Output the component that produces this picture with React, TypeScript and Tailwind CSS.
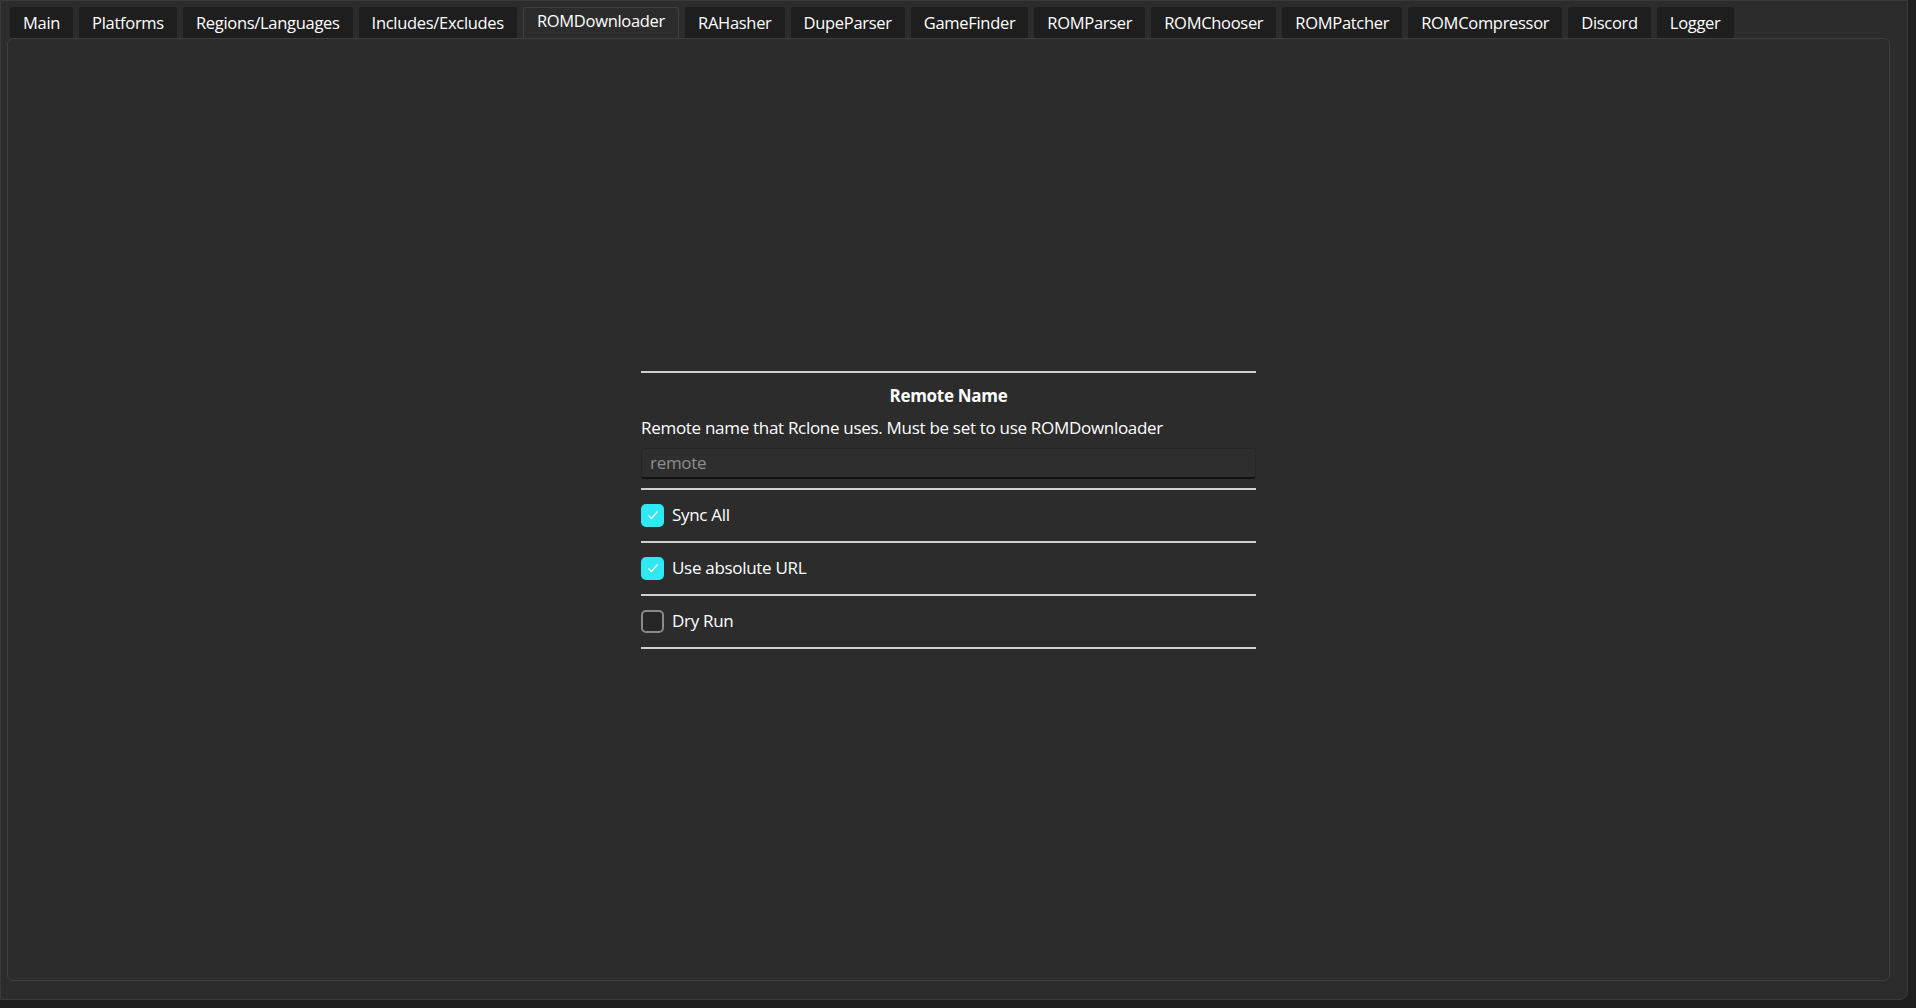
import React from "react";

const tabs = ["Main","Platforms","Regions/Languages","Includes/Excludes","ROMDownloader","RAHasher","DupeParser","GameFinder","ROMParser","ROMChooser","ROMPatcher","ROMCompressor","Discord","Logger"];

function Check({ on }: { on: boolean }) {
  return on ? (
    <div className="w-[23px] h-[23px] rounded-[5px] bg-[#2ee8f4] flex items-center justify-center">
      <svg width="14" height="14" viewBox="0 0 14 14"><path d="M2.5 7.5 L5.5 10.5 L11.5 3.5" fill="none" stroke="#ffffff" strokeWidth="1.3" /></svg>
    </div>
  ) : (
    <div className="w-[23px] h-[23px] rounded-[5px] border-2 border-[#8a8a8a] bg-[#262626]" />
  );
}

export default function App() {
  return (
    <div className="w-[1916px] h-[1008px] bg-[#1f1f1f] text-white" style={{ fontFamily: '"Open Sans", "Noto Sans", sans-serif' }}>
      <div className="w-[1908px] h-[1000px] bg-[#2c2c2c] border border-[#3a3a3a] rounded-br-[8px] flex flex-col">
        <div className="flex gap-[6px] pl-[9px] pt-[6px] h-[37px] items-end">
          {tabs.map((t) => (
            <div key={t} className={`h-[31px] px-[13px] flex items-center text-[16.5px] tracking-[-0.3px] rounded-t-[3px] ${t === "ROMDownloader" ? "bg-[#2c2c2c] border border-[#404040] border-b-0 pb-[3px]" : "bg-[#1e1e1e] pt-[2px]"}`}>{t}</div>
          ))}
        </div>
        <div className="ml-[6px] w-[1883px] h-[943px] border border-[#3e3e3e] rounded-[6px] flex items-center justify-center">
          <div className="w-[615px] text-[17px] tracking-[-0.3px]">
            <div className="border-t-2 border-[#d0d0d0] pt-[10px] pb-[9px]">
              <div className="text-center font-bold">Remote Name</div>
              <div className="mt-[7px]">Remote name that Rclone uses. Must be set to use ROMDownloader</div>
              <div className="mt-[7px] h-[31px] bg-[#2e2e2e] border border-[#262626] border-b-2 border-b-[#111] rounded-[3px] px-[8px] flex items-center text-[#8d8d8d]">remote</div>
            </div>
            {[["Sync All", true], ["Use absolute URL", true], ["Dry Run", false]].map(([l, on]) => (
              <div key={l as string} className="border-t-2 border-[#d0d0d0] h-[53px] flex items-center gap-[8px]">
                <Check on={on as boolean} />
                <span>{l as string}</span>
              </div>
            ))}
            <div className="border-t-2 border-[#d0d0d0]" />
          </div>
        </div>
      </div>
    </div>
  );
}
